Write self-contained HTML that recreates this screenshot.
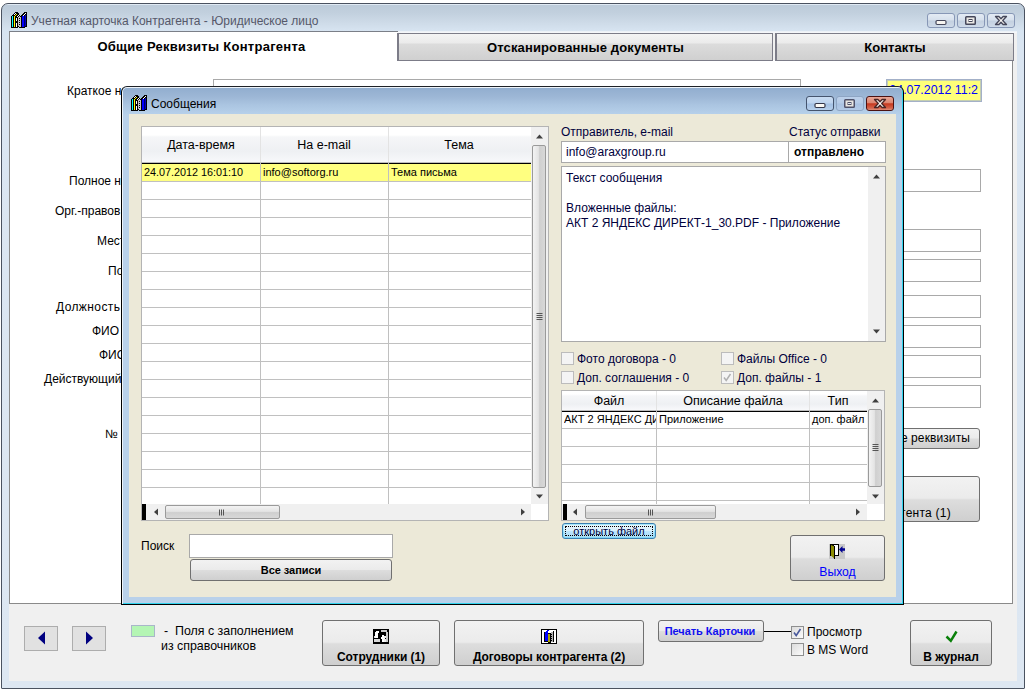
<!DOCTYPE html>
<html><head><meta charset="utf-8">
<style>
*{box-sizing:border-box;margin:0;padding:0}
html,body{width:1025px;height:690px;overflow:hidden;background:#fff}
body{font-family:"Liberation Sans",sans-serif;font-size:12px;color:#000;position:relative}
.a{position:absolute;white-space:nowrap}
/* outer window */
#win{left:1px;top:3px;width:1024px;height:686px;border:1px solid #4a5260;border-radius:7px 7px 1px 1px;
 background:linear-gradient(#e0eaf4 0,#e0eaf4 1px,#bccbda 1px,#c2d0de 9px,#cddae7 18px,#d7e4f1 27px,#dae5f1 40px,#dde7f2 100%)}
#wtitle{left:31px;top:13px;font-size:12px;color:#55586a;line-height:16px}
#client{left:9px;top:31px;width:1008px;height:650px;background:#f0f0f0}
#ctop{left:9px;top:31px;width:1008px;height:2px;background:linear-gradient(#e9eff6,#f8f9fb)}
#page{left:9px;top:60px;width:1004px;height:544px;background:#fff;border-left:1px solid #8a8a8a;border-right:1px solid #8a8a8a;border-bottom:1px solid #8a8a8a}
.tab{top:33px;height:28px;border:1px solid #7c7c88;border-left-width:2px;background:linear-gradient(#f4f4f4 0,#ebebeb 9px,#dcdcdc 10px,#d0d0d0 100%);font-weight:bold;font-size:13px;text-align:center;line-height:28px;letter-spacing:.14px}
#tab1{left:9px;top:31px;width:389px;height:30px;background:#fff;border-top:1px solid #7b7f88;border-left:1px solid #8a8a8a;font-weight:bold;font-size:13px;text-align:center;line-height:30px;letter-spacing:.27px;padding-right:5px}
.lbl{font-size:12px;line-height:14px}
.fld{border:1px solid #a9a9a9;background:#fff}
.cap{border:1px solid #8797b6;border-radius:3px;background:linear-gradient(#e4ebf4 0,#d6e0ec 48%,#c3d0e0 52%,#cfdbe9 100%)}
/* dialog */
#dlg{left:121px;top:86px;width:783px;height:519px;border:1px solid #000;border-top-color:#1e2126;border-radius:6px 6px 0 0;
 background:#b9d1ea;box-shadow:inset 1px 1px 0 #eef4fa,inset -1px -1px 0 #30d4ee}
#dtitlebg{left:123px;top:88px;width:779px;height:27px;border-radius:4px 4px 0 0;background:linear-gradient(#92aecf 0,#9db7d6 9px,#abc5e1 17px,#b6d0ea 26px,#b9d1ea 100%)}
#dclient{left:129px;top:114px;width:767px;height:483px;background:#ece9d8}
.grid{background:#fff;border:1px solid #b4b4b4}
.hl{height:1px;background:#c0c0c0}
.vl{width:1px;background:#c0c0c0}
.sb{background:#f0f0f0}
.thumbv{border:1px solid #9a9a9a;border-radius:2px;background:linear-gradient(90deg,#f3f3f3 0,#e4e4e4 45%,#cfcfcf 55%,#d8d8d8 100%)}
.thumbh{border:1px solid #9a9a9a;border-radius:2px;background:linear-gradient(#f3f3f3 0,#e4e4e4 45%,#cfcfcf 55%,#d8d8d8 100%)}
.btn{letter-spacing:-.05px;border:1px solid #707070;border-radius:3px;background:linear-gradient(#f2f2f2 0,#ebebeb 48%,#dddddd 52%,#cfcfcf 100%);text-align:center}
.cb{width:13px;height:13px;border:1px solid #8e8f8f;background:linear-gradient(135deg,#dcdcdc,#fbfbfb)}
.cbd{width:13px;height:13px;border:1px solid #bcbcbc;background:#f4f4f4}
</style></head><body>
<div class="a" id="win"></div>
<div class="a" id="wtitle">Учетная карточка Контрагента - Юридическое лицо</div>
<div class="a" id="client"></div>
<div class="a" id="ctop"></div>
<div class="a" id="page"></div>
<div class="a" id="tab1">Общие Реквизиты Контрагента</div>
<div class="a tab" style="left:397px;width:376px">Отсканированные документы</div>
<div class="a tab" style="left:775px;width:239px;letter-spacing:0">Контакты</div>

<svg width="0" height="0" style="position:absolute"><defs><symbol id="bk" viewBox="0 0 16 16"><rect x="4" y="0" width="3" height="1" fill="#000"/><rect x="13" y="0" width="3" height="1" fill="#000"/><rect x="3" y="1" width="1" height="1" fill="#000"/><rect x="4" y="1" width="1" height="1" fill="#fff"/><rect x="5" y="1" width="3" height="1" fill="#000"/><rect x="12" y="1" width="2" height="1" fill="#000"/><rect x="14" y="1" width="1" height="1" fill="#fff"/><rect x="15" y="1" width="1" height="1" fill="#000"/><rect x="2" y="2" width="1" height="1" fill="#000"/><rect x="3" y="2" width="1" height="1" fill="#fff"/><rect x="4" y="2" width="1" height="1" fill="#000"/><rect x="5" y="2" width="1" height="1" fill="#ffff00"/><rect x="6" y="2" width="2" height="1" fill="#000"/><rect x="11" y="2" width="2" height="1" fill="#000"/><rect x="13" y="2" width="1" height="1" fill="#fff"/><rect x="14" y="2" width="2" height="1" fill="#000"/><rect x="1" y="3" width="3" height="1" fill="#000"/><rect x="4" y="3" width="1" height="1" fill="#ffff00"/><rect x="5" y="3" width="2" height="1" fill="#000"/><rect x="7" y="3" width="1" height="1" fill="#fff"/><rect x="8" y="3" width="1" height="1" fill="#000"/><rect x="10" y="3" width="2" height="1" fill="#000"/><rect x="12" y="3" width="1" height="1" fill="#fff"/><rect x="13" y="3" width="1" height="1" fill="#000"/><rect x="14" y="3" width="1" height="1" fill="#0000c6"/><rect x="15" y="3" width="1" height="1" fill="#000"/><rect x="0" y="4" width="1" height="1" fill="#000"/><rect x="1" y="4" width="1" height="1" fill="#00ffff"/><rect x="2" y="4" width="1" height="1" fill="#000"/><rect x="3" y="4" width="1" height="1" fill="#ffff00"/><rect x="4" y="4" width="2" height="1" fill="#000"/><rect x="6" y="4" width="1" height="1" fill="#fff"/><rect x="7" y="4" width="1" height="1" fill="#000"/><rect x="8" y="4" width="1" height="1" fill="#c6c3c6"/><rect x="9" y="4" width="2" height="1" fill="#000"/><rect x="11" y="4" width="2" height="1" fill="#0000ff"/><rect x="13" y="4" width="1" height="1" fill="#000060"/><rect x="14" y="4" width="1" height="1" fill="#0000c6"/><rect x="15" y="4" width="1" height="1" fill="#000"/><rect x="0" y="5" width="1" height="1" fill="#000"/><rect x="1" y="5" width="1" height="1" fill="#00ffff"/><rect x="2" y="5" width="1" height="1" fill="#000"/><rect x="3" y="5" width="1" height="1" fill="#ffff00"/><rect x="4" y="5" width="3" height="1" fill="#000"/><rect x="7" y="5" width="3" height="1" fill="#c6c3c6"/><rect x="10" y="5" width="1" height="1" fill="#000"/><rect x="11" y="5" width="2" height="1" fill="#0000ff"/><rect x="13" y="5" width="1" height="1" fill="#000060"/><rect x="14" y="5" width="1" height="1" fill="#0000c6"/><rect x="15" y="5" width="1" height="1" fill="#000"/><rect x="0" y="6" width="1" height="1" fill="#000"/><rect x="1" y="6" width="1" height="1" fill="#00ffff"/><rect x="2" y="6" width="1" height="1" fill="#000"/><rect x="3" y="6" width="1" height="1" fill="#ffff00"/><rect x="4" y="6" width="1" height="1" fill="#000"/><rect x="5" y="6" width="1" height="1" fill="#fff"/><rect x="6" y="6" width="1" height="1" fill="#000"/><rect x="7" y="6" width="1" height="1" fill="#c6c3c6"/><rect x="8" y="6" width="1" height="1" fill="#000"/><rect x="9" y="6" width="1" height="1" fill="#c6c3c6"/><rect x="10" y="6" width="1" height="1" fill="#000"/><rect x="11" y="6" width="2" height="1" fill="#0000ff"/><rect x="13" y="6" width="1" height="1" fill="#000060"/><rect x="14" y="6" width="1" height="1" fill="#0000c6"/><rect x="15" y="6" width="1" height="1" fill="#000"/><rect x="0" y="7" width="1" height="1" fill="#000"/><rect x="1" y="7" width="1" height="1" fill="#00ffff"/><rect x="2" y="7" width="1" height="1" fill="#000"/><rect x="3" y="7" width="1" height="1" fill="#ffff00"/><rect x="4" y="7" width="1" height="1" fill="#000"/><rect x="5" y="7" width="1" height="1" fill="#fff"/><rect x="6" y="7" width="1" height="1" fill="#000"/><rect x="7" y="7" width="3" height="1" fill="#c6c3c6"/><rect x="10" y="7" width="1" height="1" fill="#000"/><rect x="11" y="7" width="2" height="1" fill="#0000ff"/><rect x="13" y="7" width="1" height="1" fill="#000060"/><rect x="14" y="7" width="1" height="1" fill="#0000c6"/><rect x="15" y="7" width="1" height="1" fill="#000"/><rect x="0" y="8" width="1" height="1" fill="#000"/><rect x="1" y="8" width="1" height="1" fill="#00ffff"/><rect x="2" y="8" width="1" height="1" fill="#000"/><rect x="3" y="8" width="1" height="1" fill="#ffff00"/><rect x="4" y="8" width="1" height="1" fill="#000"/><rect x="5" y="8" width="1" height="1" fill="#fff"/><rect x="6" y="8" width="1" height="1" fill="#000"/><rect x="7" y="8" width="1" height="1" fill="#c6c3c6"/><rect x="8" y="8" width="1" height="1" fill="#000"/><rect x="9" y="8" width="1" height="1" fill="#c6c3c6"/><rect x="10" y="8" width="1" height="1" fill="#000"/><rect x="11" y="8" width="2" height="1" fill="#0000ff"/><rect x="13" y="8" width="1" height="1" fill="#000060"/><rect x="14" y="8" width="1" height="1" fill="#0000c6"/><rect x="15" y="8" width="1" height="1" fill="#000"/><rect x="0" y="9" width="1" height="1" fill="#000"/><rect x="1" y="9" width="1" height="1" fill="#00ffff"/><rect x="2" y="9" width="1" height="1" fill="#000"/><rect x="3" y="9" width="1" height="1" fill="#ffff00"/><rect x="4" y="9" width="3" height="1" fill="#000"/><rect x="7" y="9" width="3" height="1" fill="#c6c3c6"/><rect x="10" y="9" width="1" height="1" fill="#000"/><rect x="11" y="9" width="2" height="1" fill="#0000ff"/><rect x="13" y="9" width="1" height="1" fill="#000060"/><rect x="14" y="9" width="1" height="1" fill="#0000c6"/><rect x="15" y="9" width="1" height="1" fill="#000"/><rect x="0" y="10" width="1" height="1" fill="#000"/><rect x="1" y="10" width="1" height="1" fill="#00ffff"/><rect x="2" y="10" width="1" height="1" fill="#000"/><rect x="3" y="10" width="1" height="1" fill="#ffff00"/><rect x="4" y="10" width="3" height="1" fill="#000"/><rect x="7" y="10" width="1" height="1" fill="#c6c3c6"/><rect x="8" y="10" width="1" height="1" fill="#000"/><rect x="9" y="10" width="1" height="1" fill="#c6c3c6"/><rect x="10" y="10" width="1" height="1" fill="#000"/><rect x="11" y="10" width="2" height="1" fill="#0000ff"/><rect x="13" y="10" width="1" height="1" fill="#000060"/><rect x="14" y="10" width="1" height="1" fill="#0000c6"/><rect x="15" y="10" width="1" height="1" fill="#000"/><rect x="0" y="11" width="1" height="1" fill="#000"/><rect x="1" y="11" width="1" height="1" fill="#00ffff"/><rect x="2" y="11" width="1" height="1" fill="#000"/><rect x="3" y="11" width="1" height="1" fill="#ffff00"/><rect x="4" y="11" width="1" height="1" fill="#000"/><rect x="5" y="11" width="1" height="1" fill="#fff"/><rect x="6" y="11" width="1" height="1" fill="#000"/><rect x="7" y="11" width="3" height="1" fill="#c6c3c6"/><rect x="10" y="11" width="1" height="1" fill="#000"/><rect x="11" y="11" width="2" height="1" fill="#0000ff"/><rect x="13" y="11" width="1" height="1" fill="#000060"/><rect x="14" y="11" width="1" height="1" fill="#0000c6"/><rect x="15" y="11" width="1" height="1" fill="#000"/><rect x="0" y="12" width="1" height="1" fill="#000"/><rect x="1" y="12" width="1" height="1" fill="#00ffff"/><rect x="2" y="12" width="1" height="1" fill="#000"/><rect x="3" y="12" width="1" height="1" fill="#ffff00"/><rect x="4" y="12" width="1" height="1" fill="#000"/><rect x="5" y="12" width="1" height="1" fill="#fff"/><rect x="6" y="12" width="1" height="1" fill="#000"/><rect x="7" y="12" width="1" height="1" fill="#c6c3c6"/><rect x="8" y="12" width="1" height="1" fill="#000"/><rect x="9" y="12" width="1" height="1" fill="#c6c3c6"/><rect x="10" y="12" width="1" height="1" fill="#000"/><rect x="11" y="12" width="2" height="1" fill="#0000ff"/><rect x="13" y="12" width="1" height="1" fill="#000060"/><rect x="14" y="12" width="1" height="1" fill="#0000c6"/><rect x="15" y="12" width="1" height="1" fill="#000"/><rect x="0" y="13" width="1" height="1" fill="#000"/><rect x="1" y="13" width="1" height="1" fill="#00ffff"/><rect x="2" y="13" width="1" height="1" fill="#000"/><rect x="3" y="13" width="1" height="1" fill="#ffff00"/><rect x="4" y="13" width="1" height="1" fill="#000"/><rect x="5" y="13" width="1" height="1" fill="#fff"/><rect x="6" y="13" width="1" height="1" fill="#000"/><rect x="7" y="13" width="3" height="1" fill="#c6c3c6"/><rect x="10" y="13" width="1" height="1" fill="#000"/><rect x="11" y="13" width="2" height="1" fill="#0000ff"/><rect x="13" y="13" width="1" height="1" fill="#000060"/><rect x="14" y="13" width="1" height="1" fill="#0000c6"/><rect x="15" y="13" width="1" height="1" fill="#000"/><rect x="0" y="14" width="1" height="1" fill="#000"/><rect x="1" y="14" width="1" height="1" fill="#00ffff"/><rect x="2" y="14" width="1" height="1" fill="#000"/><rect x="3" y="14" width="1" height="1" fill="#ffff00"/><rect x="4" y="14" width="1" height="1" fill="#000"/><rect x="5" y="14" width="1" height="1" fill="#fff"/><rect x="6" y="14" width="2" height="1" fill="#000"/><rect x="8" y="14" width="2" height="1" fill="#c6c3c6"/><rect x="10" y="14" width="1" height="1" fill="#000"/><rect x="11" y="14" width="2" height="1" fill="#0000ff"/><rect x="13" y="14" width="1" height="1" fill="#000060"/><rect x="14" y="14" width="2" height="1" fill="#000"/><rect x="0" y="15" width="7" height="1" fill="#000"/><rect x="8" y="15" width="6" height="1" fill="#000"/></symbol></defs></svg>
<svg class="a" style="left:11px;top:12px" width="16" height="16" shape-rendering="crispEdges"><use href="#bk"/></svg>
<div class="a cap" style="left:927px;top:13px;width:28px;height:15px"></div>
<div class="a cap" style="left:957px;top:13px;width:28px;height:15px"></div>
<div class="a cap" style="left:987px;top:13px;width:28px;height:15px"></div>
<svg class="a" style="left:927px;top:13px" width="88" height="15">
<rect x="9" y="7.5" width="10" height="4" rx="1.2" fill="#f6f4f0" stroke="#45475a" stroke-width="1.2"/>
<rect x="38.750" y="3.750" width="9.500" height="7.500" rx=".8" fill="#ebe9e5" stroke="#45475a" stroke-width="1.500"/>
<rect x="42" y="6.500" width="3" height="2" fill="#fff" stroke="#45475a" stroke-width="1"/>
<path d="M68.500 3.500h3.400l2.100 2.300l2.100-2.300h3.400l-3.800 4l3.800 4h-3.400l-2.100-2.300l-2.100 2.300h-3.400l3.800-4z" fill="#f6f4f0" stroke="#45475a" stroke-width="1.300" stroke-linejoin="round"/>
</svg>
<div class="a lbl" style="left:67px;top:84px">Краткое н</div>
<div class="a lbl" style="left:69px;top:174px">Полное н</div>
<div class="a lbl" style="left:55px;top:204px">Орг.-правов</div>
<div class="a lbl" style="left:97px;top:234px">Мест</div>
<div class="a lbl" style="left:108px;top:264px">Поч</div>
<div class="a lbl" style="left:56px;top:300px;letter-spacing:.4px">Должность</div>
<div class="a lbl" style="left:92px;top:324px">ФИО</div>
<div class="a lbl" style="left:99px;top:348px">ФИО</div>
<div class="a lbl" style="left:44px;top:372px">Действующий</div>
<div class="a lbl" style="left:105px;top:427px">№</div>
<div class="a fld" style="left:213px;top:79px;width:588px;height:23px"></div>
<div class="a" style="left:886px;top:79px;width:96px;height:23px;background:#ffff78;border:1px solid #a3b0c8;color:#0000ff;font-size:12.4px;line-height:21px;text-align:right;padding-right:3px;overflow:hidden;box-shadow:inset 0 0 0 1px #c5cfb0">24.07.2012 11:2</div>
<div class="a fld" style="left:600px;top:169px;width:381px;height:23px"></div>
<div class="a fld" style="left:600px;top:229px;width:381px;height:23px"></div>
<div class="a fld" style="left:600px;top:259px;width:381px;height:23px"></div>
<div class="a fld" style="left:600px;top:295px;width:381px;height:23px"></div>
<div class="a fld" style="left:600px;top:325px;width:381px;height:23px"></div>
<div class="a fld" style="left:600px;top:355px;width:381px;height:23px"></div>
<div class="a fld" style="left:600px;top:385px;width:381px;height:23px"></div>
<div class="a btn" style="left:780px;top:428px;width:200px;height:21px;font-size:12px;line-height:19px;text-align:right;padding-right:9px;letter-spacing:.1px">Дополнительные реквизиты</div>
<div class="a btn" style="left:780px;top:476px;width:200px;height:46px;font-size:12px;line-height:14px;text-align:right;padding:29px 28px 0 0;letter-spacing:.25px">Счета контрагента (1)</div>
<div class="a" style="left:24px;top:626px;width:34px;height:25px;background:#e1e1e1;border:1px solid #adadad"></div>
<div class="a" style="left:72px;top:626px;width:34px;height:25px;background:#e1e1e1;border:1px solid #adadad"></div>
<svg class="a" style="left:24px;top:626px" width="83" height="25"><path d="M21 5.5v13l-7-6.500z" fill="#000080"/><path d="M62 5.500v13l7-6.500z" fill="#000080"/></svg>
<div class="a" style="left:131px;top:625px;width:24px;height:12px;background:#b4f5b4;border:1px solid #a9b6c9"></div>
<div class="a lbl" style="left:164px;top:624px;white-space:pre;font-size:12.4px">-  Поля с заполнением</div>
<div class="a lbl" style="left:161px;top:639px;font-size:12.4px">из справочников</div>
<div class="a btn" style="left:322px;top:620px;width:118px;height:46px;font-weight:bold;font-size:12px;line-height:14px;padding-top:29px">Сотрудники (1)</div>
<div class="a btn" style="left:454px;top:620px;width:190px;height:46px;font-weight:bold;font-size:12px;line-height:14px;padding-top:29px">Договоры контрагента (2)</div>
<div class="a btn" style="left:658px;top:620px;width:106px;height:22px;font-weight:bold;font-size:11px;line-height:20px;color:#1010f0;padding-right:2px">Печать Карточки</div>
<div class="a" style="left:764px;top:631px;width:27px;height:1px;background:#000"></div>
<div class="a cb" style="left:791px;top:626px"></div>
<div class="a cb" style="left:791px;top:643px"></div>
<svg class="a" style="left:791px;top:626px" width="13" height="13"><path d="M3 6.500l2.200 3l4.300-6.500" fill="none" stroke="#4a5a9c" stroke-width="1.600"/></svg>
<div class="a lbl" style="left:807px;top:625px">Просмотр</div>
<div class="a lbl" style="left:807px;top:643px">В MS Word</div>
<div class="a btn" style="left:910px;top:620px;width:82px;height:46px;font-weight:bold;font-size:12px;line-height:14px;padding-top:29px">В журнал</div>
<svg class="a" style="left:943px;top:629px" width="16" height="14"><path d="M3.500 7.500l4.300 4.300l5.700-9.300" fill="none" stroke="#0a800a" stroke-width="2.500"/></svg>
<svg class="a" style="left:373px;top:629px" width="16" height="15" shape-rendering="crispEdges"><rect width="16" height="15" fill="#000"/><rect x="2" y="3" width="3" height="6" fill="#fff"/><rect x="3" y="2" width="3" height="2" fill="#fff"/><rect x="1" y="7" width="1" height="2" fill="#ddd"/><rect x="1" y="10" width="6" height="3" fill="#d8d8d8"/><rect x="8" y="1" width="6" height="2" fill="#ccc"/><rect x="13" y="3" width="2" height="10" fill="#ccc"/><rect x="9" y="6" width="2" height="7" fill="#fff"/><rect x="8" y="8" width="4" height="2" fill="#fff"/><rect x="11" y="7" width="2" height="2" fill="#eee"/><rect x="11" y="10" width="2" height="3" fill="#eee"/></svg>
<svg class="a" style="left:541px;top:629px" width="16" height="15" shape-rendering="crispEdges"><rect width="16" height="15" fill="#000"/><rect x="1" y="1" width="14" height="13" fill="#fff"/><rect x="3" y="3" width="1" height="10" fill="#000"/><rect x="4" y="3" width="3" height="9" fill="#0000ff"/><rect x="5" y="2" width="2" height="1" fill="#0000ff"/><rect x="6" y="1" width="2" height="1" fill="#0000ff"/><rect x="3" y="12" width="5" height="1" fill="#000"/><rect x="7" y="4" width="3" height="10" fill="#000"/><rect x="7" y="5" width="2" height="8" fill="#a8a000"/><rect x="10" y="3" width="3" height="10" fill="#b0b0b0"/><rect x="12" y="2" width="1" height="11" fill="#000"/><rect x="10" y="5" width="1" height="1" fill="#000"/><rect x="10" y="7" width="1" height="1" fill="#000"/><rect x="10" y="9" width="1" height="1" fill="#000"/><rect x="10" y="11" width="1" height="1" fill="#000"/></svg>
<!-- DIALOG -->
<div class="a" id="dlg"></div>
<div class="a" id="dtitlebg"></div>
<div class="a" id="dclient"></div>
<svg class="a" style="left:131px;top:95px" width="16" height="16" shape-rendering="crispEdges"><use href="#bk"/></svg>
<div class="a" style="left:151px;top:96px;font-size:12px;line-height:16px;color:#000">Сообщения</div>
<div class="a" style="left:806px;top:96px;width:28px;height:15px;border:1px solid #45546e;border-radius:3px;background:linear-gradient(#c9dcf2 0,#bdd3ee 48%,#a3c0e3 52%,#b6cfec 100%)"></div>
<div class="a" style="left:836px;top:96px;width:28px;height:15px;border:1px solid #8ea5c4;border-radius:3px;background:linear-gradient(#bcd0ea 0,#b5cbe7 48%,#a9c2e2 52%,#b3cae7 100%)"></div>
<div class="a" style="left:866px;top:96px;width:28px;height:15px;border:1px solid #4c1212;border-radius:3px;background:linear-gradient(#e9a797 0,#dd8570 45%,#c6381f 52%,#d4634b 85%,#e0907c 100%)"></div>
<svg class="a" style="left:806px;top:96px" width="89" height="15">
<rect x="9" y="7.500" width="10" height="4" rx="1.200" fill="#fbf9f5" stroke="#35374a" stroke-width="1.200"/>
<rect x="38.750" y="3.750" width="9.500" height="7.500" rx=".8" fill="#e8e6e2" stroke="#50526a" stroke-width="1.500"/>
<rect x="42" y="6.500" width="3" height="2" fill="#dfe6f0" stroke="#50526a" stroke-width="1"/>
<path d="M68.500 3.500h3.400l2.100 2.300l2.100-2.300h3.400l-3.800 4l3.800 4h-3.400l-2.100-2.300l-2.100 2.300h-3.400l3.800-4z" fill="#fdfbf9" stroke="#4a2626" stroke-width="1.300" stroke-linejoin="round"/>
</svg>
<div class="a grid" style="left:141px;top:126px;width:408px;height:395px"></div>
<div class="a" style="left:142px;top:127px;width:389px;height:36px;background:linear-gradient(#fff 0,#fff 8px,#f5f6f8 10px,#eef0f3 24px,#f8f9fb 100%)"></div>
<div class="a" style="left:142px;top:162px;width:389px;height:2px;background:linear-gradient(#bdbdbd 0,#bdbdbd 1px,#000 1px)"></div>
<div class="a" style="left:142px;top:164px;width:389px;height:17px;background:#ffff80"></div>
<div class="a hl" style="left:142px;top:181px;width:389px"></div>
<div class="a hl" style="left:142px;top:199px;width:389px"></div>
<div class="a hl" style="left:142px;top:217px;width:389px"></div>
<div class="a hl" style="left:142px;top:235px;width:389px"></div>
<div class="a hl" style="left:142px;top:253px;width:389px"></div>
<div class="a hl" style="left:142px;top:271px;width:389px"></div>
<div class="a hl" style="left:142px;top:289px;width:389px"></div>
<div class="a hl" style="left:142px;top:307px;width:389px"></div>
<div class="a hl" style="left:142px;top:325px;width:389px"></div>
<div class="a hl" style="left:142px;top:343px;width:389px"></div>
<div class="a hl" style="left:142px;top:361px;width:389px"></div>
<div class="a hl" style="left:142px;top:379px;width:389px"></div>
<div class="a hl" style="left:142px;top:397px;width:389px"></div>
<div class="a hl" style="left:142px;top:415px;width:389px"></div>
<div class="a hl" style="left:142px;top:433px;width:389px"></div>
<div class="a hl" style="left:142px;top:451px;width:389px"></div>
<div class="a hl" style="left:142px;top:469px;width:389px"></div>
<div class="a hl" style="left:142px;top:487px;width:389px"></div>
<div class="a vl" style="left:260px;top:127px;height:377px"></div>
<div class="a" style="left:260px;top:127px;height:35px;width:1px;background:#e3e3e3"></div>
<div class="a vl" style="left:388px;top:127px;height:377px"></div>
<div class="a" style="left:388px;top:127px;height:35px;width:1px;background:#e3e3e3"></div>
<div class="a" style="left:141px;top:137px;width:120px;text-align:center;font-size:12.5px;line-height:16px">Дата-время</div>
<div class="a" style="left:264px;top:137px;width:120px;text-align:center;font-size:12.5px;line-height:16px">На e-mail</div>
<div class="a" style="left:399px;top:137px;width:120px;text-align:center;font-size:12.5px;line-height:16px">Тема</div>
<div class="a" style="left:144px;top:166px;font-size:10.8px;line-height:13px">24.07.2012 16:01:10</div>
<div class="a" style="left:263px;top:166px;font-size:11px;line-height:13px">info@softorg.ru</div>
<div class="a" style="left:391px;top:166px;font-size:11px;line-height:13px">Тема письма</div>
<div class="a sb" style="left:531px;top:127px;width:17px;height:377px"></div>
<div class="a thumbv" style="left:532px;top:145px;width:14px;height:343px"></div>
<svg class="a" style="left:531px;top:127px" width="17" height="377"><path d="M5 11.5h7l-3.500-4z" fill="#404040"/><path d="M5 367.500h7l-3.500 4z" fill="#404040"/><path d="M5.500 186.500h6M5.500 188.500h6M5.500 190.500h6M5.500 192.500h6" stroke="#555" stroke-width="1"/></svg>
<div class="a sb" style="left:142px;top:504px;width:389px;height:16px"></div>
<div class="a" style="left:142px;top:504px;width:4px;height:16px;background:#000"></div>
<div class="a thumbh" style="left:165px;top:505px;width:115px;height:14px"></div>
<svg class="a" style="left:142px;top:504px" width="389" height="16"><path d="M16 4.500v7l-4-3.500z" fill="#404040"/><path d="M379 4.500v7l4-3.500z" fill="#404040"/><path d="M77.500 5.500v6M79.500 5.500v6M81.500 5.500v6" stroke="#555" stroke-width="1"/></svg>
<div class="a lbl" style="left:141px;top:539px;font-size:12px">Поиск</div>
<div class="a fld" style="left:189px;top:534px;width:204px;height:24px"></div>
<div class="a btn" style="left:190px;top:559px;width:202px;height:22px;font-weight:bold;font-size:11px;line-height:20px">Все записи</div>
<div class="a lbl" style="left:561px;top:125px;color:#00003c">Отправитель, e-mail</div>
<div class="a lbl" style="left:789px;top:125px;color:#00003c">Статус отправки</div>
<div class="a fld" style="left:561px;top:141px;width:228px;height:22px;font-size:12px;line-height:20px;padding-left:4px;color:#00003c">info@araxgroup.ru</div>
<div class="a fld" style="left:788px;top:141px;width:98px;height:22px;font-size:12px;line-height:20px;padding-left:5px;font-weight:bold">отправлено</div>
<div class="a fld" style="left:561px;top:166px;width:325px;height:176px"></div>
<div class="a" style="left:566px;top:171px;font-size:12px;line-height:15px;color:#00003c;white-space:pre">Текст сообщения

Вложенные файлы:
АКТ 2 ЯНДЕКС ДИРЕКТ-1_30.PDF - Приложение</div>
<div class="a sb" style="left:868px;top:167px;width:17px;height:174px"></div>
<svg class="a" style="left:868px;top:167px" width="17" height="174"><path d="M5 11.500h7l-3.500-4z" fill="#404040"/><path d="M5 162.500h7l-3.500 4z" fill="#404040"/></svg>
<div class="a cbd" style="left:561px;top:352px"></div><div class="a lbl" style="left:577px;top:352px;color:#00003c">Фото договора - 0</div>
<div class="a cbd" style="left:561px;top:371px"></div><div class="a lbl" style="left:577px;top:371px;color:#00003c">Доп. соглашения - 0</div>
<div class="a cbd" style="left:721px;top:352px"></div><div class="a lbl" style="left:737px;top:352px;color:#00003c">Файлы Office - 0</div>
<div class="a cbd" style="left:721px;top:371px"></div><div class="a lbl" style="left:737px;top:371px;color:#00003c">Доп. файлы - 1</div>
<svg class="a" style="left:721px;top:371px" width="13" height="13"><path d="M3 6.500l2.200 3l4.300-6.500" fill="none" stroke="#b0b0b0" stroke-width="1.500"/></svg>
<div class="a grid" style="left:561px;top:390px;width:324px;height:131px"></div>
<div class="a" style="left:562px;top:391px;width:305px;height:19px;background:linear-gradient(#fff 0,#fff 3px,#f5f6f8 5px,#eef0f3 13px,#f8f9fb 100%)"></div>
<div class="a" style="left:562px;top:410px;width:305px;height:2px;background:linear-gradient(#bdbdbd 0,#bdbdbd 1px,#000 1px)"></div>
<div class="a hl" style="left:562px;top:428px;width:305px"></div>
<div class="a hl" style="left:562px;top:446px;width:305px"></div>
<div class="a hl" style="left:562px;top:464px;width:305px"></div>
<div class="a hl" style="left:562px;top:482px;width:305px"></div>
<div class="a hl" style="left:562px;top:500px;width:305px"></div>
<div class="a vl" style="left:656px;top:391px;height:113px"></div>
<div class="a" style="left:656px;top:391px;height:19px;width:1px;background:#e3e3e3"></div>
<div class="a vl" style="left:809px;top:391px;height:113px"></div>
<div class="a" style="left:809px;top:391px;height:19px;width:1px;background:#e3e3e3"></div>
<div class="a" style="left:539px;top:393px;width:140px;text-align:center;font-size:12.5px;line-height:16px">Файл</div>
<div class="a" style="left:663px;top:393px;width:140px;text-align:center;font-size:12.5px;line-height:16px">Описание файла</div>
<div class="a" style="left:768px;top:393px;width:140px;text-align:center;font-size:12.5px;line-height:16px">Тип</div>
<div class="a" style="left:564px;top:413px;width:92px;overflow:hidden;font-size:11px;line-height:13px">АКТ 2 ЯНДЕКС ДИРЕКТ</div>
<div class="a" style="left:659px;top:413px;font-size:11px;line-height:13px">Приложение</div>
<div class="a" style="left:812px;top:413px;font-size:11px;line-height:13px">доп. файл</div>
<div class="a sb" style="left:867px;top:391px;width:17px;height:113px"></div>
<div class="a thumbv" style="left:868px;top:409px;width:14px;height:78px"></div>
<svg class="a" style="left:867px;top:391px" width="17" height="113"><path d="M5 11.500h7l-3.500-4z" fill="#404040"/><path d="M5 103.500h7l-3.500 4z" fill="#404040"/><path d="M5.500 53.500h6M5.500 55.500h6M5.500 57.500h6M5.500 59.500h6" stroke="#555" stroke-width="1"/></svg>
<div class="a sb" style="left:562px;top:504px;width:305px;height:16px"></div>
<div class="a" style="left:563px;top:504px;width:4px;height:16px;background:#000"></div>
<div class="a thumbh" style="left:585px;top:505px;width:131px;height:14px"></div>
<svg class="a" style="left:562px;top:504px" width="305" height="16"><path d="M15 4.500v7l-4-3.500z" fill="#404040"/><path d="M294 4.500v7l4-3.500z" fill="#404040"/><path d="M86.500 5.500v6M88.500 5.500v6M90.500 5.500v6" stroke="#555" stroke-width="1"/></svg>
<div class="a" style="left:562px;top:523px;width:94px;height:16px;border:1px solid #3c7fb1;border-radius:3px;background:linear-gradient(#eaf6fd 0,#d9f0fc 48%,#bee6fd 52%,#a7d9f5 100%);box-shadow:inset 0 0 0 1px #48d8fb66"></div>
<div class="a" style="left:565px;top:526px;width:88px;height:10px;border:1px dotted #000"></div>
<div class="a" style="left:562px;top:524px;width:94px;height:11px;overflow:hidden;text-align:center;font-size:11px;line-height:15px;color:#00003c">открыть файл</div>
<div class="a btn" style="left:790px;top:535px;width:95px;height:46px;font-size:12.2px;line-height:14px;padding-top:29px;color:#0000ff;letter-spacing:0">Выход</div>
<svg class="a" style="left:829px;top:544px" width="16" height="15"><rect x="0" y="0" width="16" height="15" fill="#c8c8c8"/><rect x="1" y="0" width="9" height="12" fill="#000"/><rect x="5" y="1" width="4" height="10" fill="#fff"/><path d="M2 1l3.500 1.500v12.500l-3.500-3.500z" fill="#8c8c00"/><path d="M5.500 2v13" stroke="#000" stroke-width="1"/><path d="M10 5.500l3.500-3.500v2.200h2.500v2.600h-2.500v2.200z" fill="#000090"/></svg>
</body></html>
